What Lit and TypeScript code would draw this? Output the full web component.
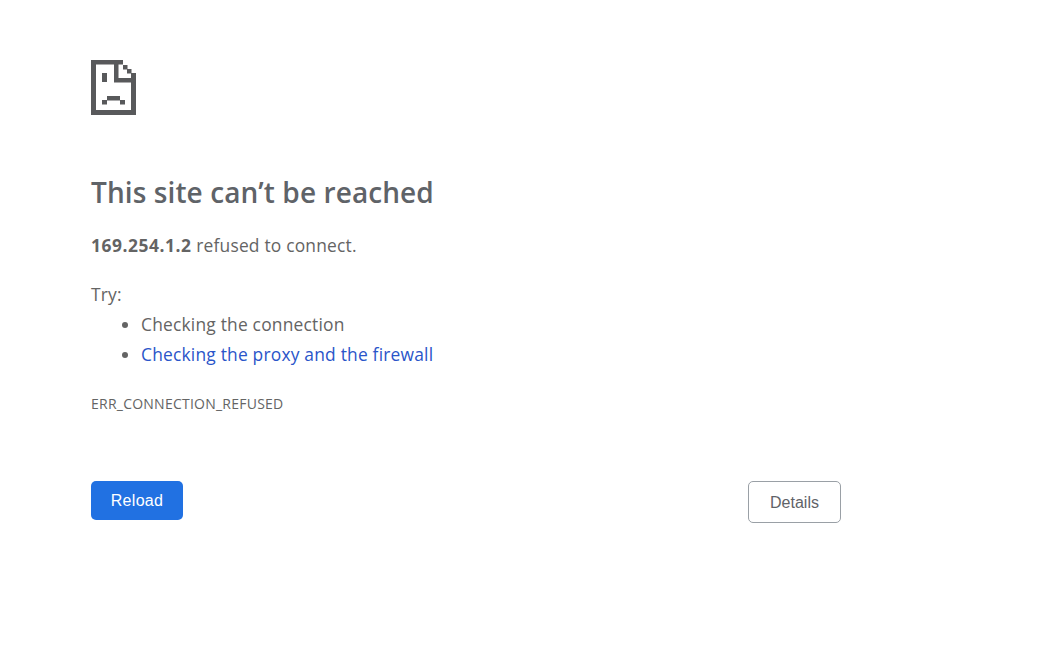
import { LitElement, css, html, svg } from "lit";
import { customElement } from "lit/decorators.js";

// [x, y, w, h] in page pixels, relative to the icon's top left corner
const ICON_RECTS = [
  [0, 0, 32, 4.5],
  [0, 0, 5, 55],
  [0, 50, 45, 5],
  [40, 13, 5, 42],
  [23, 0, 4.5, 22],
  [23, 18, 22, 4.5],
  [32, 5, 4.5, 4.5],
  [36, 9, 4.5, 4.5],
  [11, 13, 5, 9],
  [16, 36, 13, 4.5],
  [11, 40, 5, 4.5],
  [29, 40, 5, 4.5],
];

@customElement("app-root")
export class AppRoot extends LitElement {
  static styles = css`
    :host {
      display: block;
      min-height: 646px;
      background: #fff;
      font-family: "Open Sans", "Noto Sans", sans-serif;
      font-size: 17.4px;
      letter-spacing: 0.2px;
      color: #646464;
    }
    .page {
      display: flex;
      flex-direction: column;
      width: 750px;
      padding: 60px 0 0 91px;
    }
    .icon {
      display: block;
      width: 45px;
      height: 55px;
      fill: #58595b;
    }
    h1 {
      margin: 57px 0 0;
      font-size: 28px;
      line-height: 40px;
      letter-spacing: 0.09px;
      font-weight: 600;
      color: #5f6368;
    }
    p {
      margin: 0;
      line-height: 30px;
    }
    .host {
      margin-top: 18px;
    }
    .host b {
      font-weight: 700;
      letter-spacing: 0.55px;
    }
    .try {
      margin-top: 19px;
    }
    ul {
      margin: 0;
      padding-left: 50px;
    }
    li {
      line-height: 30px;
    }
    a {
      color: #2a55c9;
      text-decoration: none;
    }
    .code {
      margin-top: 25px;
      font-size: 14px;
      letter-spacing: 0.24px;
      line-height: 20px;
      text-transform: uppercase;
    }
    .buttons {
      display: flex;
      justify-content: space-between;
      align-items: flex-start;
      margin-top: 67px;
    }
    button {
      box-sizing: border-box;
      border-radius: 5px;
      font-family: "Liberation Sans", Arial, sans-serif;
      font-size: 16px;
      padding: 0;
    }
    .reload {
      width: 92px;
      height: 39px;
      border: none;
      letter-spacing: 0.3px;
      background: #2171e2;
      color: #fff;
    }
    .details {
      width: 93px;
      height: 42px;
      padding-top: 1px;
      border: 1px solid #9aa0a6;
      background: #fff;
      color: #5f6368;
    }
  `;

  render() {
    return html`
      <div class="page">
        <svg class="icon" viewBox="0 0 45 55" aria-hidden="true">
          ${ICON_RECTS.map(
            ([x, y, w, h]) => svg`<rect x=${x} y=${y} width=${w} height=${h}></rect>`,
          )}
        </svg>
        <h1>This site can’t be reached</h1>
        <p class="host"><b>169.254.1.2</b> refused to connect.</p>
        <p class="try">Try:</p>
        <ul>
          <li>Checking the connection</li>
          <li><a href="#">Checking the proxy and the firewall</a></li>
        </ul>
        <div class="code">ERR_CONNECTION_REFUSED</div>
        <div class="buttons">
          <button class="reload">Reload</button>
          <button class="details">Details</button>
        </div>
      </div>
    `;
  }
}
